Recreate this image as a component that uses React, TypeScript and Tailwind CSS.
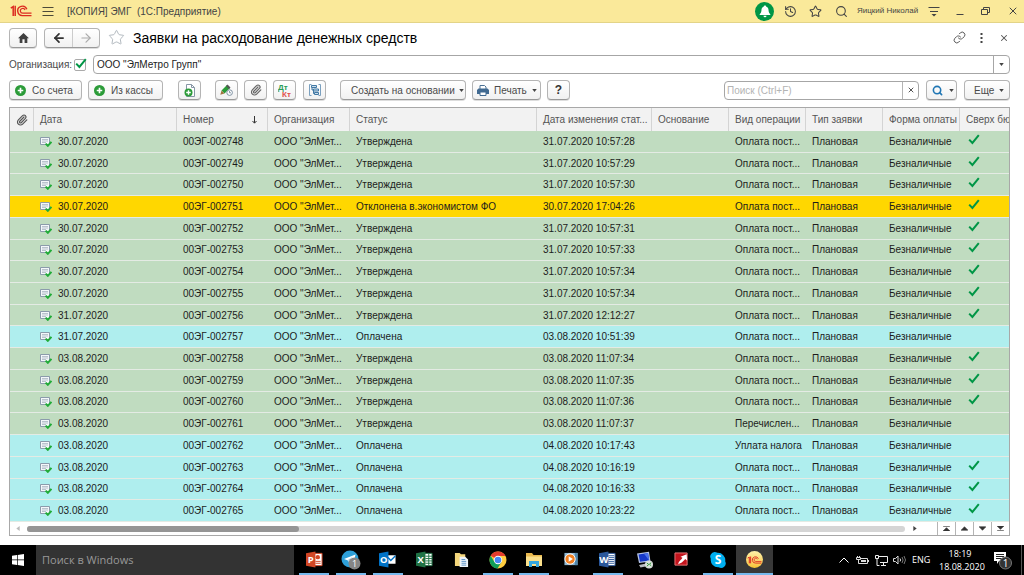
import type { ReactNode } from "react";
import { ArrowLeft, ArrowRight, History, Link, Paperclip, Search, Star, X } from "lucide-react";

type Row = {
  date: string;
  number: string;
  status: string;
  changed: string;
  operation: string;
  over: boolean;
};

const PAYMENT = "Оплата пост...";

const rows: Row[] = [
  { date: "30.07.2020", number: "00ЭГ-002748", status: "Утверждена", changed: "31.07.2020 10:57:28", operation: PAYMENT, over: true },
  { date: "30.07.2020", number: "00ЭГ-002749", status: "Утверждена", changed: "31.07.2020 10:57:29", operation: PAYMENT, over: true },
  { date: "30.07.2020", number: "00ЭГ-002750", status: "Утверждена", changed: "31.07.2020 10:57:30", operation: PAYMENT, over: true },
  { date: "30.07.2020", number: "00ЭГ-002751", status: "Отклонена в.экономистом ФО", changed: "30.07.2020 17:04:26", operation: PAYMENT, over: true },
  { date: "30.07.2020", number: "00ЭГ-002752", status: "Утверждена", changed: "31.07.2020 10:57:31", operation: PAYMENT, over: true },
  { date: "30.07.2020", number: "00ЭГ-002753", status: "Утверждена", changed: "31.07.2020 10:57:33", operation: PAYMENT, over: true },
  { date: "30.07.2020", number: "00ЭГ-002754", status: "Утверждена", changed: "31.07.2020 10:57:34", operation: PAYMENT, over: true },
  { date: "30.07.2020", number: "00ЭГ-002755", status: "Утверждена", changed: "31.07.2020 10:57:34", operation: PAYMENT, over: true },
  { date: "31.07.2020", number: "00ЭГ-002756", status: "Утверждена", changed: "31.07.2020 12:12:27", operation: PAYMENT, over: true },
  { date: "31.07.2020", number: "00ЭГ-002757", status: "Оплачена", changed: "03.08.2020 10:51:39", operation: PAYMENT, over: false },
  { date: "03.08.2020", number: "00ЭГ-002758", status: "Утверждена", changed: "03.08.2020 11:07:34", operation: PAYMENT, over: true },
  { date: "03.08.2020", number: "00ЭГ-002759", status: "Утверждена", changed: "03.08.2020 11:07:35", operation: PAYMENT, over: true },
  { date: "03.08.2020", number: "00ЭГ-002760", status: "Утверждена", changed: "03.08.2020 11:07:36", operation: PAYMENT, over: true },
  { date: "03.08.2020", number: "00ЭГ-002761", status: "Утверждена", changed: "03.08.2020 11:07:37", operation: "Перечислен...", over: false },
  { date: "03.08.2020", number: "00ЭГ-002762", status: "Оплачена", changed: "04.08.2020 10:17:43", operation: "Уплата налога", over: false },
  { date: "03.08.2020", number: "00ЭГ-002763", status: "Оплачена", changed: "04.08.2020 10:16:19", operation: PAYMENT, over: true },
  { date: "03.08.2020", number: "00ЭГ-002764", status: "Оплачена", changed: "04.08.2020 10:16:33", operation: PAYMENT, over: true },
  { date: "03.08.2020", number: "00ЭГ-002765", status: "Оплачена", changed: "04.08.2020 10:23:22", operation: PAYMENT, over: true },
];

function rowColor(status: string) {
  if (status === "Утверждена") return "bg-[#c0dcc0]";
  if (status === "Оплачена") return "bg-[#afeeee]";
  return "bg-[#ffd700]";
}

function Logo({ className }: { className: string }) {
  return (
    <svg viewBox="0 0 22 12" className={className} fill="none" stroke="currentColor">
      <path d="M.8 3.200 3.200 1.600V11M5.200 .8V11" strokeWidth="1.500" />
      <path d="M16.800 4.200A4.700 4.700 0 1 0 12.800 10.600H21.500" strokeWidth="1.400" />
      <path d="M15 5A2.400 2.400 0 1 0 12.800 8.200H21.500" strokeWidth="1.200" />
    </svg>
  );
}

function Caret() {
  return (
    <svg viewBox="0 0 6 4" className="h-[3px] w-[5px] shrink-0" fill="#444">
      <path d="M0 0h6L3 4z" />
    </svg>
  );
}

function Tick({ className }: { className: string }) {
  return (
    <svg viewBox="0 0 12 11" className={className} fill="none" stroke="#009646" strokeWidth="2">
      <path d="M1.200 5.600 4.400 9 10.800 1.200" />
    </svg>
  );
}

function PlusCircle() {
  return (
    <svg viewBox="0 0 12 12" className="size-[11px] shrink-0">
      <circle cx="6" cy="6" r="6" fill="#2b9b38" />
      <path d="M6 3v6M3 6h6" stroke="#fff" strokeWidth="1.800" />
    </svg>
  );
}

function DocIcon() {
  return (
    <svg viewBox="0 0 12 11" className="h-[11px] w-3 shrink-0">
      <path d="M.5 1.500h9v7h-9z" fill="#f4f7fa" stroke="#8b9bab" />
      <path d="M2 3.500h6M2 5h6M2 6.500h4" stroke="#a9b5c1" strokeWidth=".8" />
      <path d="M5.600 7.600 7.800 9.800 11.400 5.800" fill="none" stroke="#22ac38" strokeWidth="2" />
    </svg>
  );
}

function ToolButton({ label, className, children }: { label?: string; className: string; children: ReactNode }) {
  return (
    <button
      type="button"
      aria-label={label}
      className={`flex h-5 shrink-0 items-center rounded-sm border border-[#b4b4b4] border-b-[#999] bg-gradient-to-b from-white to-[#f1f1f1] whitespace-nowrap text-[#4a4a4a] shadow-[0_1px_0_#ddd] ${className}`}
    >
      {children}
    </button>
  );
}

function TitleBar() {
  return (
    <header className="flex h-[23px] shrink-0 items-center border-b border-[#e3d488] bg-[#fae99a] pr-[5px] pl-2 text-[#444]">
      <Logo className="ml-[2px] h-3 w-[22px] text-[#dc2b20]" />
      <button type="button" aria-label="Меню" className="ml-[10px]">
        <svg viewBox="0 0 12 11" className="h-[11px] w-3" stroke="#4d4a38">
          <path d="M.5 1.500h11M.5 5.500h11M.5 9.500h11" />
        </svg>
      </button>
      <span className="ml-[13px] text-[10px] whitespace-pre">[КОПИЯ] ЭМГ  (1С:Предприятие)</span>
      <div className="ml-auto flex items-center">
        <button type="button" aria-label="Уведомления" className="flex size-[19px] items-center justify-center rounded-full bg-[#009646]">
          <svg viewBox="0 0 12 13" className="h-[13px] w-3" fill="#fff">
            <path d="M6 .5c.8 0 1.100.5 1.100 1.100C9 2.200 9.500 3.800 9.600 5.800 9.700 7.500 10.400 8.300 11.300 9.300v.7H.7v-.7C1.600 8.300 2.300 7.500 2.400 5.800 2.500 3.800 3 2.200 4.900 1.600 4.900 1 5.200.5 6 .5zM4.500 10.800h3A1.500 1.500 0 0 1 4.500 10.800z" />
          </svg>
        </button>
        <button type="button" aria-label="История" className="ml-[10px]"><History className="size-[13px]" strokeWidth={1.9} /></button>
        <button type="button" aria-label="Избранное" className="ml-3"><Star className="size-[13px]" strokeWidth={1.9} /></button>
        <button type="button" aria-label="Поиск" className="ml-[13px]"><Search className="size-[13px]" strokeWidth={2} /></button>
        <span className="ml-[9px] w-[63px] text-[8px] whitespace-nowrap">Яицкий Николай</span>
        <button type="button" aria-label="Настройки" className="ml-2">
          <svg viewBox="0 0 12 11" className="h-[11px] w-3" stroke="#444">
            <path d="M.5 1.500h11M2 5.500h8" />
            <path d="M3.500 8h5L6 10.500z" fill="#444" stroke="none" />
          </svg>
        </button>
        <button type="button" aria-label="Свернуть" className="ml-4">
          <svg viewBox="0 0 8 8" className="size-2" stroke="#444"><path d="M.5 7.500h7" /></svg>
        </button>
        <button type="button" aria-label="Развернуть" className="ml-[17px]">
          <svg viewBox="0 0 9 8" className="h-2 w-[9px]" fill="none" stroke="#444">
            <path d="M.5 2.500h6v5h-6zM2.500 2.500v-2h6v5h-2" />
          </svg>
        </button>
        <button type="button" aria-label="Закрыть" className="ml-[17px]"><X className="size-3" strokeWidth={2} /></button>
      </div>
    </header>
  );
}

function PageHeading() {
  return (
    <div className="flex h-[19px] items-center">
      <ToolButton label="Домой" className="w-7 justify-center">
        <svg viewBox="0 0 12 11" className="h-[10px] w-[11px]" fill="#404040">
          <path d="M6 0 12 5.800H10.200V11H7.200V7H4.800V11H1.800V5.800H0z" />
        </svg>
      </ToolButton>
      <div className="ml-[7px] flex h-5 rounded-sm border border-[#b4b4b4] border-b-[#999] bg-gradient-to-b from-white to-[#f1f1f1] shadow-[0_1px_0_#ddd]">
        <button type="button" aria-label="Назад" className="flex w-[27px] items-center justify-center text-[#333]">
          <ArrowLeft className="size-[14px]" strokeWidth={3} />
        </button>
        <button type="button" aria-label="Вперед" className="flex w-[27px] items-center justify-center border-l border-[#ccc] text-[#aaa]">
          <ArrowRight className="size-[14px]" strokeWidth={2} />
        </button>
      </div>
      <button type="button" aria-label="В избранное" className="ml-2 text-[#a5adb5]">
        <Star className="size-[17px]" strokeWidth={1.2} />
      </button>
      <h1 className="ml-2 text-sm whitespace-nowrap text-black">Заявки на расходование денежных средств</h1>
      <div className="ml-auto flex items-center pr-px text-[#555]">
        <button type="button" aria-label="Ссылка"><Link className="size-[13px]" strokeWidth={1.8} /></button>
        <button type="button" aria-label="Еще действия" className="ml-[14px]">
          <svg viewBox="0 0 3 10" className="h-[10px] w-[3px]" fill="#444">
            <path d="M.5 0h2v2h-2zM.5 4h2v2h-2zM.5 8h2v2h-2z" />
          </svg>
        </button>
        <button type="button" aria-label="Закрыть форму" className="ml-4"><X className="size-[10px]" strokeWidth={2.5} /></button>
      </div>
    </div>
  );
}

function OrganizationField() {
  return (
    <div className="mt-2 flex h-[19px] items-center text-[10px]">
      <label htmlFor="use-org" className="w-[65px] whitespace-nowrap text-[#4a4a4a]">Организация:</label>
      <span className="relative size-3 shrink-0">
        <input id="use-org" type="checkbox" defaultChecked className="block size-3 appearance-none rounded-xs border border-[#aaa] bg-white" />
        <Tick className="pointer-events-none absolute -top-px left-px h-[11px] w-3" />
      </span>
      <div className="ml-[7px] flex h-full min-w-0 flex-1 rounded-sm border border-[#a6a6a6]">
        <input aria-label="Организация" defaultValue={'ООО "ЭлМетро Групп"'} className="min-w-0 flex-1 bg-transparent px-[3px] text-[#222] outline-none" />
        <button type="button" aria-label="Выбрать организацию" className="flex w-4 items-center justify-center border-l border-[#a6a6a6]"><Caret /></button>
      </div>
    </div>
  );
}

function Toolbar() {
  return (
    <div className="mt-[6px] flex items-center text-[10px]">
      <ToolButton className="w-[73px] gap-[6px] pl-[5px]"><PlusCircle />Со счета</ToolButton>
      <ToolButton className="ml-[6px] w-[75px] gap-[6px] pl-[5px]"><PlusCircle />Из кассы</ToolButton>
      <ToolButton label="Создать копированием" className="ml-[15px] w-[23px] justify-center">
        <svg viewBox="0 0 12 13" className="h-[13px] w-3">
          <path d="M2.500.5h5l3 3v9h-8z" fill="#fff" stroke="#8696a5" />
          <path d="M7.500.5v3h3" fill="none" stroke="#8696a5" />
          <circle cx="4.500" cy="8.500" r="4" fill="#2b9b38" />
          <path d="M4.500 6.200v4.600M2.200 8.500h4.600" stroke="#fff" strokeWidth="1.400" />
        </svg>
      </ToolButton>
      <ToolButton label="Изменить дату" className="ml-[14px] w-[23px] justify-center">
        <svg viewBox="0 0 13 12" className="h-3 w-[13px]">
          <path d="M1.500 6.500 7 1 10 4 4.500 9.500z" fill="#2b9b38" />
          <path d="M6 2 7.500.5 10.500 3.500 9 5z" fill="#555" />
          <path d="M1.500 6.500 4.500 9.500 .3 10.800z" fill="#a07540" />
          <circle cx="9.600" cy="8.600" r="2.800" fill="#fff" stroke="#7d8fa0" />
          <path d="M9.500 7v1.800h1.500" fill="none" stroke="#6f8496" strokeWidth=".8" />
        </svg>
      </ToolButton>
      <ToolButton label="Присоединенные файлы" className="ml-[6px] w-[23px] justify-center"><Paperclip className="size-3 text-[#666]" strokeWidth={2.4} /></ToolButton>
      <ToolButton label="Проводки" className="ml-[6px] w-[23px] justify-center">
        <svg viewBox="0 0 14 13" className="h-[13px] w-[14px] font-['Liberation_Sans',sans-serif]">
          <text x="0" y="6" fontSize="8" fontWeight="bold" fill="#2a9d57">Дт</text>
          <text x="4" y="12.500" fontSize="8" fontWeight="bold" fill="#e0504a">Кт</text>
        </svg>
      </ToolButton>
      <ToolButton label="Структура подчиненности" className="ml-[7px] w-[23px] justify-center">
        <svg viewBox="0 0 12 12" className="size-3" fill="none" stroke="#4178a4">
          <path d="M2.500.5H.5v11h2M9.500.5h2v11h-2" stroke="#7ba0bf" />
          <path d="M2.500 1.500h5v2h-5zM4.500 5h5v2h-5zM5.500 8.500h4v2h-4zM3 3.500V6h1.500M4.500 7v2.500h1" fill="#c9dcea" />
        </svg>
      </ToolButton>
      <ToolButton className="ml-[14px] w-[126px] gap-1 pl-[10px]">Создать на основании<Caret /></ToolButton>
      <ToolButton className="ml-[6px] w-[69px] gap-[5px] pl-1">
        <svg viewBox="0 0 12 11" className="h-[11px] w-3 shrink-0">
          <path d="M3 4V.5h4.500L9 2v2" fill="#fff" stroke="#4b7093" />
          <path d="M1.500 3.500h9L12 5v4H0V5z" fill="#416a91" />
          <path d="M3 7h6v3.500H3z" fill="#fff" stroke="#416a91" />
        </svg>
        Печать
        <Caret />
      </ToolButton>
      <ToolButton label="Справка" className="ml-[6px] w-[23px] justify-center text-xs font-bold text-[#333]">?</ToolButton>
      <div className="ml-auto flex h-[19px] w-[195px] shrink-0 rounded-sm border border-[#a6a6a6]">
        <input type="search" aria-label="Поиск" placeholder="Поиск (Ctrl+F)" className="min-w-0 flex-1 bg-transparent px-[2px] outline-none placeholder:text-[#b3b3b3]" />
        <button type="button" aria-label="Очистить поиск" className="flex w-4 items-center justify-center border-l border-[#b4b4b4] text-[#555]"><X className="size-2" strokeWidth={3} /></button>
      </div>
      <ToolButton label="Найти" className="ml-[7px] w-[31px] gap-[6px] pl-[5px]">
        <Search className="size-[11px] text-[#2076b4]" strokeWidth={3.5} />
        <Caret />
      </ToolButton>
      <ToolButton className="ml-[7px] w-[46px] gap-[5px] pl-[9px]">Еще<Caret /></ToolButton>
    </div>
  );
}

const headCell = "border-r border-[#d4d4d4] pl-[6px] text-left font-normal whitespace-nowrap";
const cell = "border-b border-[#e4ebe4] pl-[6px] whitespace-nowrap";

function RequestsTable() {
  return (
    <section className="mt-[7px] flex min-h-0 flex-1 flex-col overflow-hidden border border-[#a8a8a8]">
      <div className="min-h-0 flex-1">
        <table className="h-full w-full table-fixed border-separate border-spacing-0 text-[10px] text-[#1c1c1c]">
          <colgroup>
            <col className="w-6" />
            <col className="w-[143px]" />
            <col className="w-[91px]" />
            <col className="w-[82px]" />
            <col />
            <col className="w-[115px]" />
            <col className="w-[77px]" />
            <col className="w-[77px]" />
            <col className="w-[77px]" />
            <col className="w-[77px]" />
            <col className="w-[49px]" />
          </colgroup>
          <thead>
            <tr className="h-[23px] bg-[#f2f2f2] text-[#555]">
              <th className={headCell} aria-label="Файлы"><Paperclip className="size-3" strokeWidth={2.4} /></th>
              <th className={headCell}>Дата</th>
              <th className={headCell}>
                <span className="flex items-center justify-between pr-[10px]">
                  Номер
                  <svg viewBox="0 0 5 8" className="h-2 w-[5px]" fill="none" stroke="#333"><path d="M2.500 0v7M.5 5 2.500 7.200 4.500 5" /></svg>
                </span>
              </th>
              <th className={headCell}>Организация</th>
              <th className={headCell}>Статус</th>
              <th className={headCell}>Дата изменения стат...</th>
              <th className={headCell}>Основание</th>
              <th className={headCell}>Вид операции</th>
              <th className={headCell}>Тип заявки</th>
              <th className={headCell}>Форма оплаты</th>
              <th className="overflow-hidden pl-[6px] text-left font-normal whitespace-nowrap">Сверх бю</th>
            </tr>
          </thead>
          <tbody>
            {rows.map((row) => (
              <tr key={row.number} className={rowColor(row.status)}>
                <td className={cell} />
                <td className={cell}>
                  <span className="flex items-center gap-[6px]"><DocIcon />{row.date}</span>
                </td>
                <td className={cell}>{row.number}</td>
                <td className={cell}>ООО "ЭлМет...</td>
                <td className={cell}>{row.status}</td>
                <td className={cell}>{row.changed}</td>
                <td className={cell} />
                <td className={cell}>{row.operation}</td>
                <td className={cell}>Плановая</td>
                <td className={cell}>Безналичные</td>
                <td className="border-b border-[#e4ebe4] pb-1 pl-2">{row.over && <Tick className="h-[11px] w-3" />}</td>
              </tr>
            ))}
          </tbody>
        </table>
      </div>
      <div className="flex h-[13px] shrink-0 items-center bg-white">
        <svg viewBox="0 0 4 6" className="ml-[6px] h-[5px] w-1" fill="#bbb"><path d="M4 0v6L0 3z" /></svg>
        <div className="ml-[7px] h-[6px] flex-1 rounded-full bg-[#d5d5d5]">
          <div className="h-full w-[31%] rounded-full bg-[#959595]" />
        </div>
        <svg viewBox="0 0 4 6" className="mr-5 ml-2 h-[5px] w-1" fill="#444"><path d="M0 0v6L4 3z" /></svg>
        {[
          { label: "В начало", d: "M0 .5h8M4 2 8 6H0z" },
          { label: "Вверх", d: "M4 1 8 5H0z" },
          { label: "Вниз", d: "M0 1h8L4 5z" },
          { label: "В конец", d: "M0 0h8L4 4zM0 5.500h8" },
        ].map((item) => (
          <button key={item.label} type="button" aria-label={item.label} className="flex h-full w-[18px] items-center justify-center border-l border-[#b4b4b4]">
            <svg viewBox="0 0 8 6" className="h-[5px] w-[7px]" fill="#333" stroke="#333" strokeWidth=".8"><path d={item.d} /></svg>
          </button>
        ))}
      </div>
    </section>
  );
}

function OfficeIcon({ letter, color, children }: { letter: string; color: string; children: ReactNode }) {
  return (
    <svg viewBox="0 0 18 18" className="size-[17px]">
      {children}
      <path d="M0 2.500 10 .5v17L0 15.500z" fill={color} />
      <text x="5" y="12.500" fontSize="10" fontWeight="bold" textAnchor="middle" fill="#fff">{letter}</text>
    </svg>
  );
}

const apps: { name: string; open?: boolean; active?: boolean; icon: ReactNode }[] = [
  {
    name: "PowerPoint",
    open: true,
    icon: (
      <OfficeIcon letter="P" color="#d24726">
        <path d="M9 2.500h8v13H9z" fill="#fff" stroke="#d24726" />
        <circle cx="12.500" cy="6.500" r="2.300" fill="#d24726" />
        <path d="M10 11h5.500M10 13h5.500" stroke="#d24726" />
      </OfficeIcon>
    ),
  },
  {
    name: "Telegram",
    open: true,
    icon: (
      <svg viewBox="0 0 20 20" className="size-5">
        <circle cx="9" cy="9" r="8.500" fill="#2d9fd8" />
        <path d="M3 9 14.500 4.500 12.500 14 8.500 11z" fill="#fff" />
        <path d="M6.500 10 12 6.500 8.500 11v2.500z" fill="#b9d9ec" />
        <circle cx="13.500" cy="13.500" r="6" fill="#858585" />
        <text x="13.500" y="16.800" fontSize="9" textAnchor="middle" fill="#fff">1</text>
      </svg>
    ),
  },
  {
    name: "Outlook",
    open: true,
    icon: (
      <OfficeIcon letter="O" color="#0072c6">
        <path d="M9 4.500h8.500v9H9z" fill="#fff" />
        <path d="M9.500 7 12.500 10 17.500 5" fill="none" stroke="#0072c6" strokeWidth="1.500" />
      </OfficeIcon>
    ),
  },
  {
    name: "Excel",
    icon: (
      <OfficeIcon letter="X" color="#207245">
        <path d="M9 2.500h8v13H9z" fill="#fff" stroke="#207245" />
        <path d="M10 5.500h7M10 8h7M10 10.500h7M10 13h7M13.500 3v12" stroke="#207245" />
      </OfficeIcon>
    ),
  },
  {
    name: "Документы",
    icon: (
      <svg viewBox="0 0 16 18" className="h-[17px] w-[15px]">
        <path d="M1 2h5l1.500 1.500H12V16H1z" fill="#f4d67b" />
        <path d="M6 6h6l3 3v8H6z" fill="#eef4fa" />
        <path d="M8 9h4M8 11h5M8 13h5M8 15h5" stroke="#5c93c6" />
      </svg>
    ),
  },
  {
    name: "Chrome",
    open: true,
    icon: (
      <svg viewBox="0 0 18 18" className="size-[18px]">
        <circle cx="9" cy="9" r="8.500" fill="#ffcd40" />
        <path d="M9 9 1.640 4.750A8.500 8.500 0 0 1 16.500 5H9z" fill="#e33b2e" />
        <path d="M1.640 4.750A8.500 8.500 0 0 0 8.500 17.500L12.500 11 9 9 5.500 11z" fill="#0f9d58" />
        <circle cx="9" cy="9" r="4.200" fill="#fff" />
        <circle cx="9" cy="9" r="3.300" fill="#4587f3" />
      </svg>
    ),
  },
  {
    name: "Проводник",
    open: true,
    icon: (
      <svg viewBox="0 0 18 16" className="h-4 w-[18px]">
        <path d="M1 1h6l1.500 2H17v11H1z" fill="#e9b94f" />
        <path d="M1 4.500h16V14H1z" fill="#fbe08c" />
        <path d="M4 9h10v6h-3v-3H7v3H4z" fill="#35a7e0" />
      </svg>
    ),
  },
  {
    name: "Медиаплеер",
    icon: (
      <svg viewBox="0 0 16 16" className="h-[15px] w-4">
        <path d="M1 1h14v13H1z" fill="#8fb8d4" />
        <path d="M12 1h3v13h-3z" fill="#4f86ac" />
        <circle cx="7" cy="7.500" r="5.500" fill="#f28022" stroke="#fff" />
        <path d="M5.500 4.500 10 7.500 5.500 10.500z" fill="#fff" />
      </svg>
    ),
  },
  {
    name: "Word",
    open: true,
    icon: (
      <OfficeIcon letter="W" color="#2b579a">
        <path d="M9 2.500h8v13H9z" fill="#fff" stroke="#2b579a" />
        <path d="M10 5h6M10 7h6M10 9h6M10 11h6M10 13h6" stroke="#2b579a" />
      </OfficeIcon>
    ),
  },
  {
    name: "Удаленный рабочий стол",
    icon: (
      <svg viewBox="0 0 18 18" className="size-[18px]">
        <path d="M1 2.500 13 .8 14.500 10.500 3 12z" fill="#b8c6e6" />
        <path d="M2.500 3.500 12 2 13.200 9.500 4 10.800z" fill="#1638c8" />
        <path d="M8 2.700 12 2 13.200 9.500z" fill="#4a72ec" />
        <path d="M3 14 10 12.500 12 15 4.500 16.500z" fill="#b9bcc2" />
        <circle cx="13" cy="13.500" r="4" fill="#d9dfda" />
        <path d="m10.800 12 2 1.500-2 1.700M15.200 11.700l-1.800 1.500 1.800 1.600" fill="none" stroke="#319838" />
      </svg>
    ),
  },
  {
    name: "Синхронизация",
    icon: (
      <svg viewBox="0 0 16 16" className="size-[15px]">
        <path d="M1 1h13v13H1z" fill="#c3141d" stroke="#e87a7a" />
        <path d="M4.500 13C5 9 8 8.500 9 6L7 5l6.500-2.500L14 9l-2-1.500C10 9.500 9 11.500 4.500 13z" fill="#fff" />
      </svg>
    ),
  },
  {
    name: "Skype",
    open: true,
    icon: (
      <svg viewBox="0 0 18 18" className="size-[18px]">
        <path d="M5.500 1a4.600 4.600 0 0 1 2.800.8A7.400 7.400 0 0 1 16.200 10.300 4.600 4.600 0 0 1 9.700 16.300 7.400 7.400 0 0 1 1.800 7.800 4.600 4.600 0 0 1 5.500 1z" fill="#00aff0" />
        <text x="9" y="13" fontSize="12" fontWeight="bold" textAnchor="middle" fill="#fff">S</text>
      </svg>
    ),
  },
  {
    name: "1С:Предприятие",
    open: true,
    active: true,
    icon: (
      <span className="flex size-[17px] items-center justify-center rounded-full bg-gradient-to-b from-[#fff2a8] to-[#f6c32d]">
        <Logo className="h-2 w-[15px] text-[#dc2b20]" />
      </span>
    ),
  },
];

function Taskbar() {
  return (
    <footer className="flex h-[30px] shrink-0 items-stretch bg-black font-['Open_Sans','Noto_Sans',sans-serif] text-white">
      <button type="button" aria-label="Пуск" className="flex w-9 items-center justify-center">
        <svg viewBox="0 0 12 12" className="size-3" fill="#fff">
          <path d="M0 1.700 5 1v4.600H0zM5.700.9 12 0v5.600H5.700zM0 6.300h5V11l-5-.7zM5.700 6.300H12V12l-6.300-.9z" />
        </svg>
      </button>
      <input aria-label="Поиск в Windows" placeholder="Поиск в Windows" className="w-[258px] bg-[#333] px-[6px] text-[11px] outline-none placeholder:text-[#999]" />
      <nav className="ml-[2px] grid w-[477px] grid-cols-13">
        {apps.map((app) => (
          <button
            key={app.name}
            type="button"
            aria-label={app.name}
            className={`flex flex-col items-center ${app.active ? "bg-[#383838]" : ""}`}
          >
            <span className="flex flex-1 items-center pt-px">{app.icon}</span>
            <span className={`h-[2px] ${app.active ? "w-full" : "w-[30px]"} ${app.open ? "bg-[#76b9ed]" : ""}`} />
          </button>
        ))}
      </nav>
      <div className="ml-auto flex items-center">
        <svg viewBox="0 0 10 6" className="h-[6px] w-[10px]" fill="none" stroke="#fff"><path d="M.5 5.500 5 1 9.500 5.500" /></svg>
        <svg viewBox="0 0 13 9" className="ml-[7px] h-[9px] w-[13px]" fill="none" stroke="#ddd">
          <path d="M4.500 2.500h7v5h-9v-2M12.500 4v2M.5 1.500h4v2h-4zM1.500 0v1M3.500 0v1M2.500 4v2" />
          <path d="M5 4h5v2H5z" fill="#ddd" stroke="none" />
        </svg>
        <svg viewBox="0 0 13 11" className="ml-[6px] h-[11px] w-[13px]" fill="none" stroke="#eee">
          <path d="M4 1.500h8.500v6H5M8.500 7.500v2.500M6 10.500h5M.5.5h3v3h-3zM2 3.500v7h2.500" />
        </svg>
        <svg viewBox="0 0 13 10" className="ml-[5px] h-[10px] w-[13px]" fill="none" stroke="#ddd">
          <path d="M.5 3.500h2L5 1v8L2.500 6.500h-2z" />
          <path d="M7 3.500q1.200 1.500 0 3" />
          <path d="M9 2q2.200 3 0 6M11 1q3 4 0 8" stroke="#777" />
        </svg>
        <span className="ml-[6px] w-[18px] text-[9px]">ENG</span>
        <time dateTime="2020-08-18T18:19" className="ml-[9px] w-[42px] text-center text-[9px] leading-[13px] whitespace-nowrap">
          18:19<br />18.08.2020
        </time>
        <button type="button" aria-label="Центр уведомлений" className="ml-3">
          <svg viewBox="0 0 20 20" className="size-5">
            <path d="M1 2h12v9H6l-2 3v-3H1z" fill="#fff" />
            <path d="M3 4.500h8M3 6.500h8M3 8.500h6" stroke="#222" />
            <circle cx="12.500" cy="13" r="6" fill="#333" stroke="#777" />
            <text x="12.500" y="16.500" fontSize="10" textAnchor="middle" fill="#fff">1</text>
          </svg>
        </button>
        <span className="ml-2 h-[30px] w-[3px] border-l border-[#555]" />
      </div>
    </footer>
  );
}

export default function App() {
  return (
    <div className="flex h-screen flex-col overflow-hidden bg-white font-['Liberation_Sans',Arial,sans-serif]">
      <TitleBar />
      <main className="flex min-h-0 flex-1 flex-col pt-[5px] pr-[14px] pb-[9px] pl-[9px]">
        <PageHeading />
        <OrganizationField />
        <Toolbar />
        <RequestsTable />
      </main>
      <Taskbar />
    </div>
  );
}
